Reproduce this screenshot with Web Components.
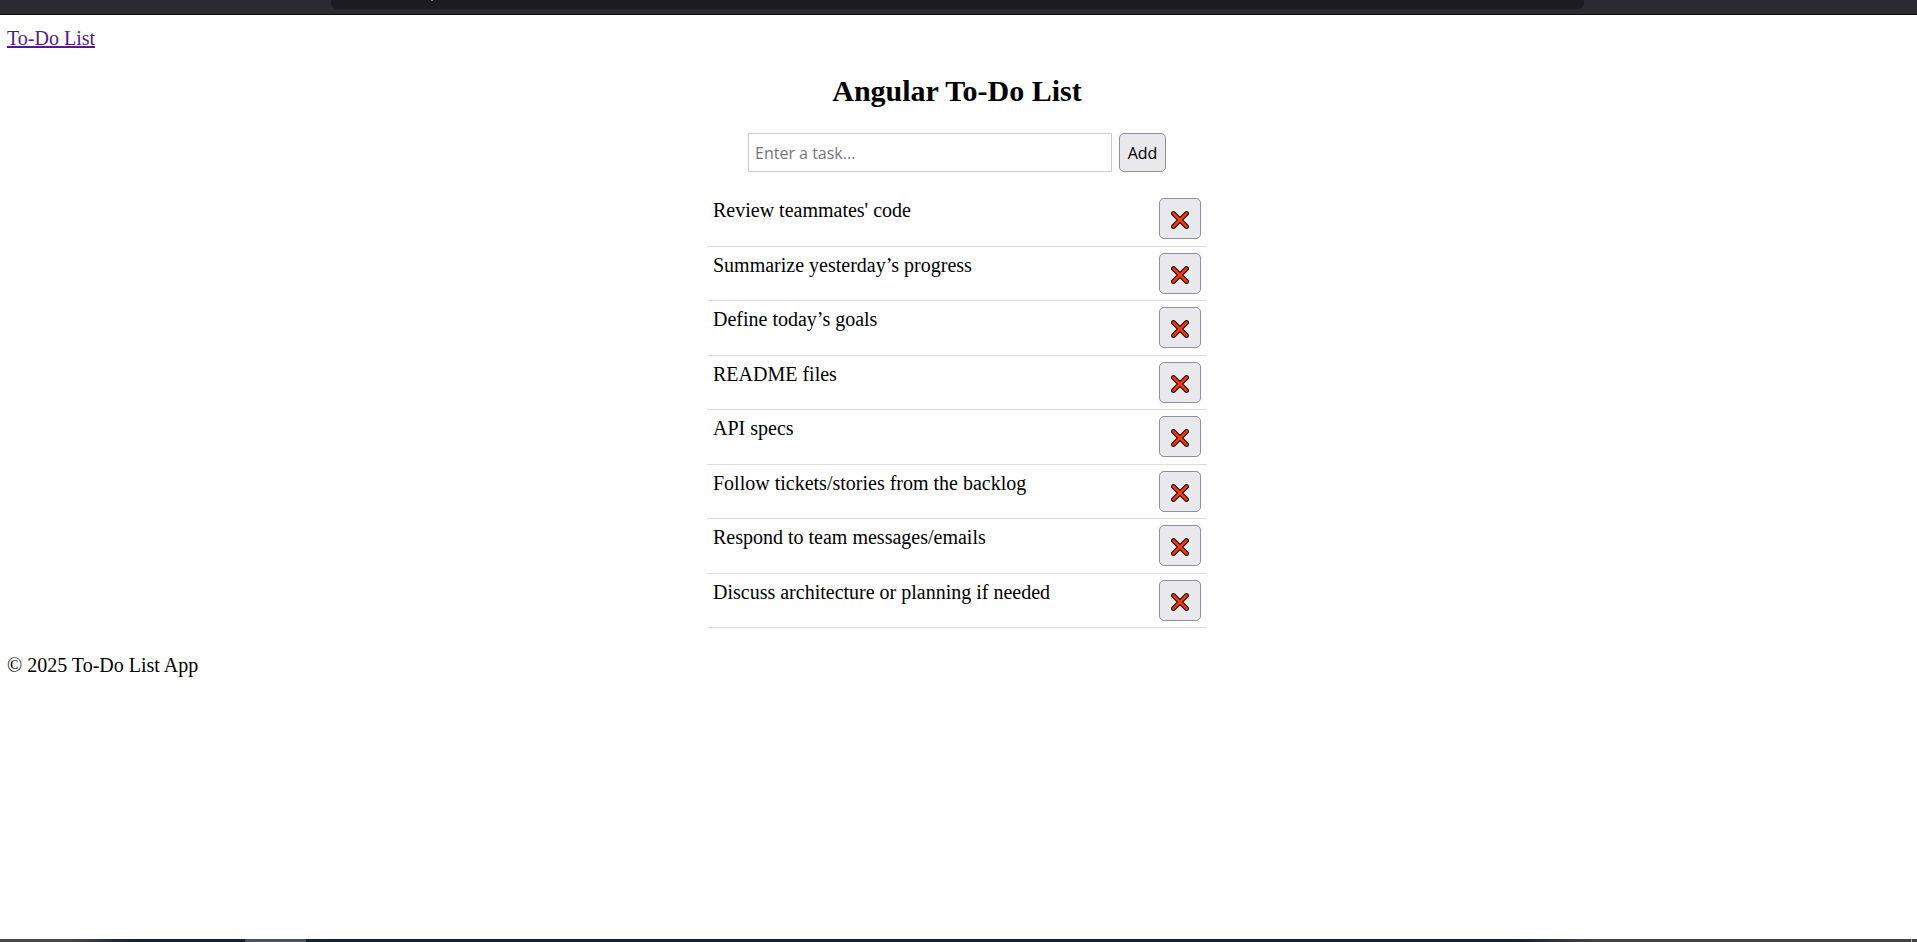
<!DOCTYPE html>
<html lang="en">
<head>
<meta charset="utf-8">
<title>To-Do List</title>
<style>
html, body { height: 100%; margin: 0; background: #fff; }
body { font: 20px/25px "Liberation Serif", "Times New Roman", serif; color: #000; }
</style>
</head>
<body>
<todo-app></todo-app>

<template id="app-tpl">
<style>
:host { display: flex; flex-direction: column; min-height: 100%; }
main { flex: 1; padding: 11px 10px 24px 7px; }
footer { margin-top: 25px; }
</style>
<browser-edge></browser-edge>
<main>
<site-nav></site-nav>
<todo-list heading="Angular To-Do List"></todo-list>
<footer>© 2025 To-Do List App</footer>
</main>
<task-strip></task-strip>
</template>

<template id="edge-tpl">
<style>
:host { display: flex; justify-content: center; height: 14px; background: #2b2a33; border-bottom: 1px solid #0c0c0d; padding: 0 333px 0 331px; }
.field { flex: 1; height: 9px; background: #1c1b22; border-radius: 0 0 5px 5px; padding-left: 100px; }
.mark { width: 2px; height: 1px; background: #8d8d92; }
</style>
<div class="field"><div class="mark"></div></div>
</template>

<template id="strip-tpl">
<style>
:host { display: flex; height: 3px; background: linear-gradient(90deg, #484848 0, #484848 70px, #15213a 130px, #15213a calc(100% - 400px), #444 calc(100% - 320px), #444 100%); padding: 0 5px 0 245px; justify-content: space-between; }
.active { width: 61px; background: #475061; }
.edge { width: 1px; background: #aaa; }
</style>
<div class="active"></div><div class="edge"></div>
</template>

<template id="nav-tpl">
<style>
:host { display: block; }
a { color: #551a8b; text-decoration: underline; }
</style>
<nav><a href="#">To-Do List</a></nav>
</template>

<template id="list-tpl">
<style>
:host { display: block; max-width: 500px; margin: 23px auto 0; }
h2 { font-size: 30px; line-height: 34px; margin: 0 0 25px; text-align: center; }
form { display: flex; justify-content: center; gap: 7px; margin: 0 0 20px; }
input, button { font: 16px/23px "Open Sans", sans-serif; box-sizing: border-box; margin: 0; height: 39px; }
input { width: 364px; padding: 0 6px; border: 1px solid #ccc; background: #fff; }
input::placeholder { color: #757575; opacity: 1; }
button { width: 47px; padding: 2px 0 0; border: 1px solid #8f8f9d; border-radius: 5px; background: #e9e9ed; color: #000; }
ul { list-style: none; margin: 0; padding: 0; display: grid; grid-auto-rows: 1fr; min-height: 436px; }
</style>
<h2></h2>
<form><input type="text" aria-label="Task" placeholder="Enter a task..."><button type="button">Add</button></form>
<ul></ul>
</template>

<template id="item-tpl">
<style>
:host { display: flex; justify-content: space-between; align-items: flex-start; padding: 6px; border-bottom: 1px solid #ddd; box-sizing: border-box; }
button { width: 42px; height: 41px; box-sizing: border-box; padding: 3px 0 0; border: 1px solid #8f8f9d; border-radius: 5px; background: #e9e9ed; display: flex; align-items: center; justify-content: center; }
svg { display: block; }
</style>
<slot></slot>
<button type="button" aria-label="Delete task"><svg width="18" height="18" viewBox="0 0 18 18"><path d="M2.5 2.5L15.5 15.5M15.5 2.5L2.5 15.5" stroke="#1a0d0a" stroke-width="4.8" stroke-linecap="round"/><path d="M2.5 2.5L15.5 15.5M15.5 2.5L2.5 15.5" stroke="#f03a17" stroke-width="2.6" stroke-linecap="round"/></svg></button>
</template>

<script>
function define(name, tpl, setup) {
  customElements.define(name, class extends HTMLElement {
    constructor() {
      super();
      this.attachShadow({ mode: 'open' }).append(document.getElementById(tpl).content.cloneNode(true));
    }
    connectedCallback() { if (setup && !this.ready) { this.ready = true; setup(this, this.shadowRoot); } }
  });
}
const tasks = [
  "Review teammates' code",
  'Summarize yesterday’s progress',
  'Define today’s goals',
  'README files',
  'API specs',
  'Follow tickets/stories from the backlog',
  'Respond to team messages/emails',
  'Discuss architecture or planning if needed'
];
define('browser-edge', 'edge-tpl');
define('task-strip', 'strip-tpl');
define('site-nav', 'nav-tpl');
define('todo-item', 'item-tpl', (host, root) => {
  root.querySelector('button').addEventListener('click', () => host.parentElement.remove());
});
define('todo-list', 'list-tpl', (host, root) => {
  root.querySelector('h2').textContent = host.getAttribute('heading');
  const list = root.querySelector('ul');
  const input = root.querySelector('input');
  const add = text => {
    const li = document.createElement('li');
    li.style.display = 'grid';
    const item = document.createElement('todo-item');
    item.textContent = text;
    li.append(item);
    list.append(li);
  };
  const submit = () => {
    if (input.value.trim()) { add(input.value.trim()); input.value = ''; }
  };
  tasks.forEach(add);
  root.querySelector('button').addEventListener('click', submit);
  root.querySelector('form').addEventListener('submit', e => { e.preventDefault(); submit(); });
});
define('todo-app', 'app-tpl');
</script>
</body>
</html>
